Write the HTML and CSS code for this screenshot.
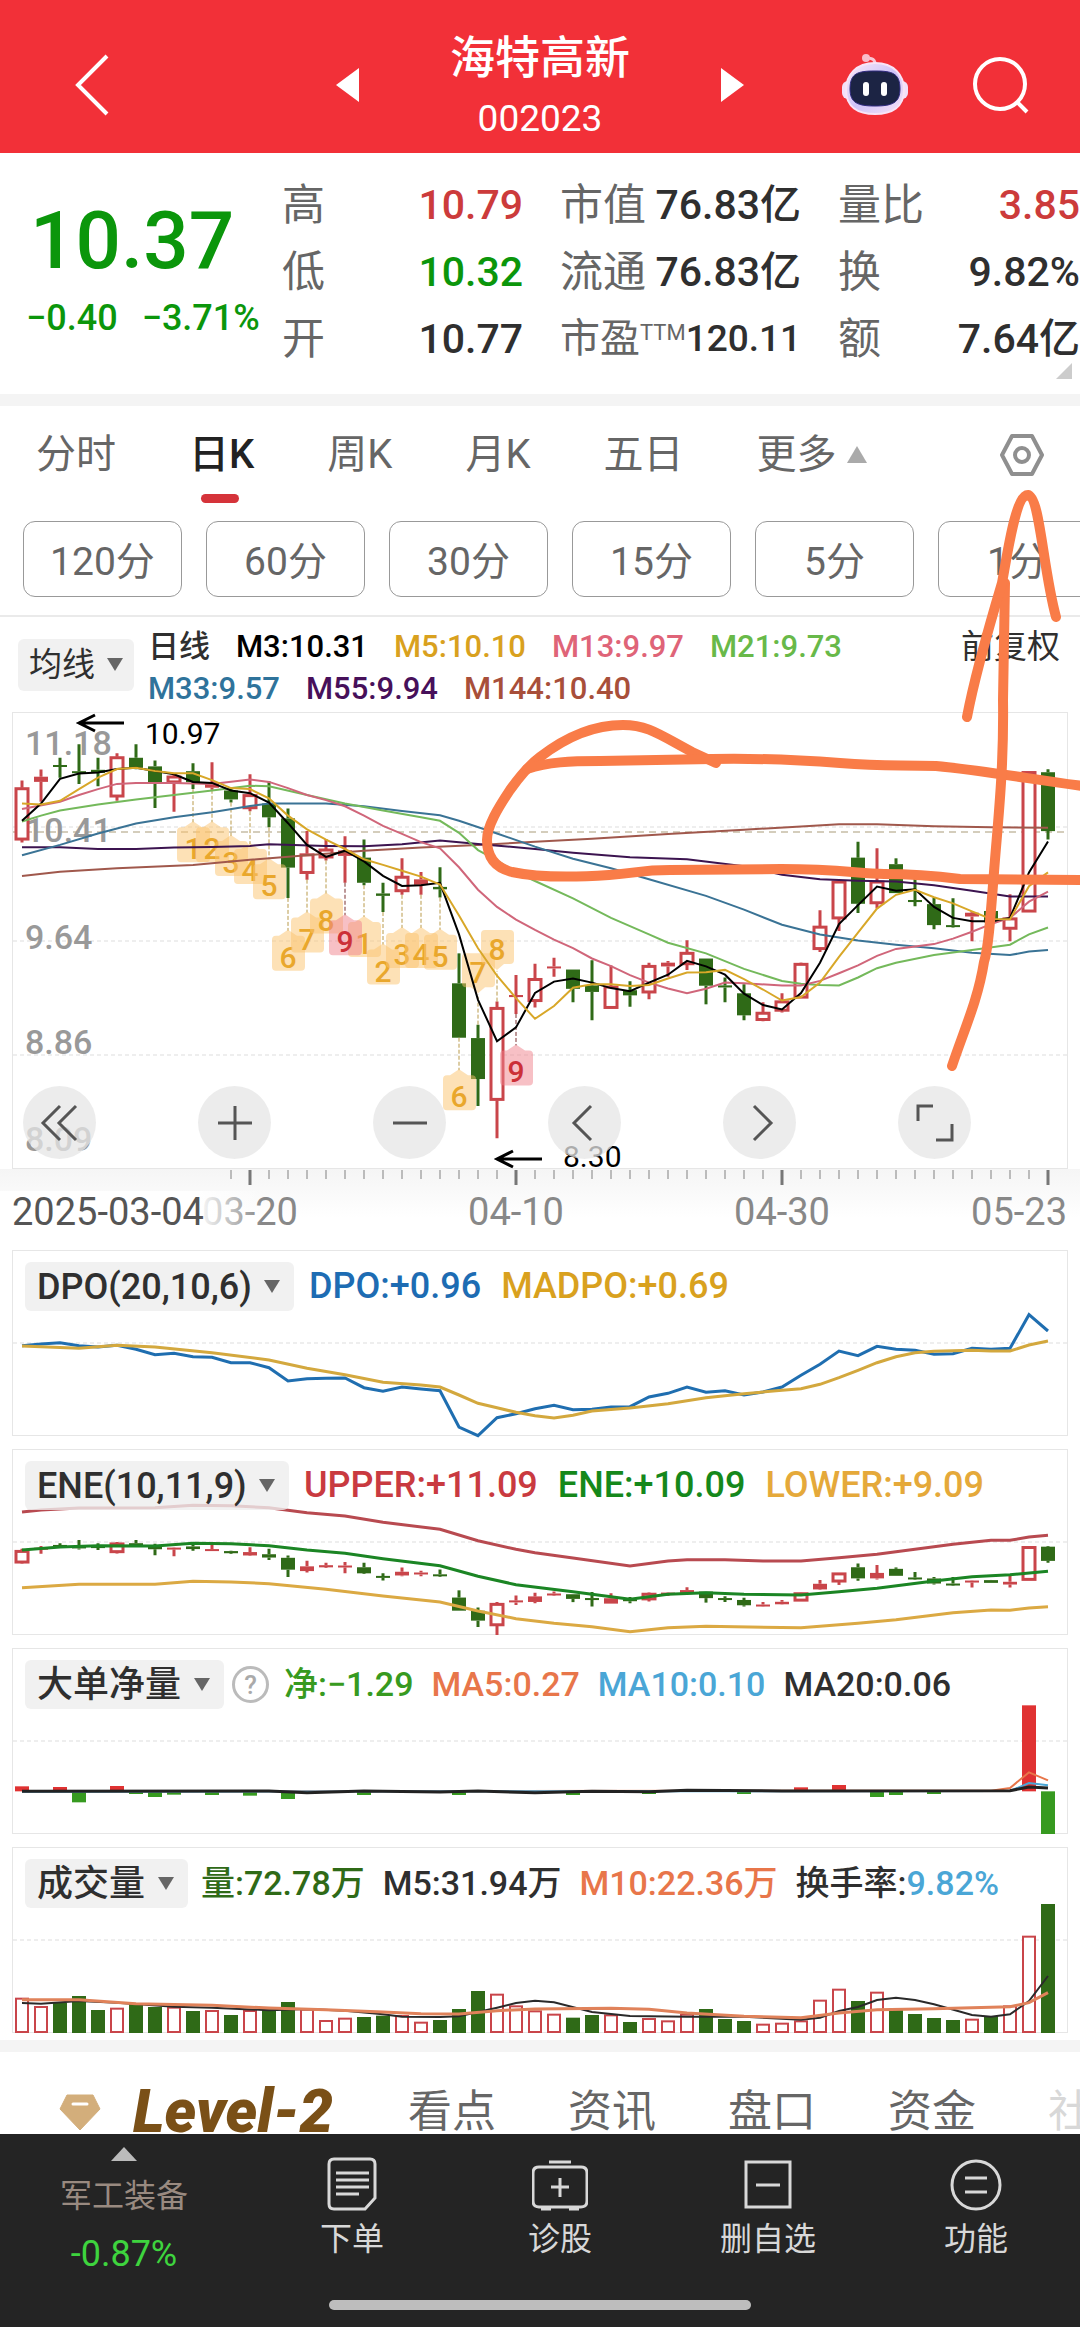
FILE: index.html
```html
<!DOCTYPE html>
<html lang="zh-CN">
<head>
    <meta charset="UTF-8">
    <meta name="viewport" content="width=device-width, initial-scale=1.0">
    <title>海特高新 002023</title>
    <link rel="stylesheet" href="styles.css">
</head>
<body>

<header class="topbar">
    <button class="icon-btn" aria-label="返回">
        <svg width="36" height="62" viewBox="0 0 36 62"><path d="M33 2 L4 31 L33 60" fill="none" stroke="#fff" stroke-width="4"/></svg>
    </button>
    <div class="stock-nav">
        <button class="icon-btn" aria-label="上一只">
            <svg width="23" height="36" viewBox="0 0 23 36"><path d="M23 1 V35 L0 18 Z" fill="#fff"/></svg>
        </button>
        <div class="stock-title">
            <h1>海特高新</h1>
            <span class="code">002023</span>
        </div>
        <button class="icon-btn" aria-label="下一只">
            <svg width="23" height="36" viewBox="0 0 23 36"><path d="M0 1 V35 L23 18 Z" fill="#fff"/></svg>
        </button>
    </div>
    <div class="top-icons">
        <button class="icon-btn" aria-label="智能助手">
            <svg width="66" height="64" viewBox="0 0 66 64">
                <defs>
                    <linearGradient id="shell" x1="0" y1="0" x2="1" y2="1">
                        <stop offset="0" stop-color="#fbe9f8"/>
                        <stop offset="0.5" stop-color="#cfc4f8"/>
                        <stop offset="1" stop-color="#f8e2f6"/>
                    </linearGradient>
                </defs>
                <path d="M33 14 C34 6 30 5 24 5" fill="none" stroke="#f9c6d4" stroke-width="3" stroke-linecap="round"/>
                <circle cx="24" cy="5" r="4" fill="#f9bccb"/>
                <rect x="0" y="28" width="12" height="18" rx="6" fill="#f2e0fa"/>
                <rect x="54" y="28" width="12" height="18" rx="6" fill="#f2e0fa"/>
                <path d="M33 10 C52 10 62 22 62 37 C62 54 50 61 33 61 C16 61 4 54 4 37 C4 22 14 10 33 10 Z" fill="url(#shell)" stroke="#f9e3f6" stroke-width="2"/>
                <path d="M33 18 C50 18 58 20 58 36 C58 50 50 53 33 53 C16 53 8 50 8 36 C8 20 16 18 33 18 Z" fill="#1c2444" stroke="#2f2a80" stroke-width="1"/>
                <rect x="21" y="29" width="6" height="14" rx="3" fill="#fff"/>
                <rect x="39" y="29" width="6" height="14" rx="3" fill="#fff"/>
            </svg>
        </button>
        <button class="icon-btn" aria-label="搜索">
            <svg width="58" height="58" viewBox="0 0 58 58"><circle cx="28" cy="28" r="25" fill="none" stroke="#fff" stroke-width="4"/><path d="M45 46 L55 56" stroke="#fff" stroke-width="4"/></svg>
        </button>
    </div>
</header>

<section class="quote">
    <div class="price">
        <div class="last">10.37</div>
        <div class="change"><span>−0.40</span><span>−3.71%</span></div>
    </div>
    <dl>
        <div><dt>高</dt><dd class="up">10.79</dd></div>
        <div><dt>低</dt><dd class="down">10.32</dd></div>
        <div><dt>开</dt><dd>10.77</dd></div>
    </dl>
    <dl>
        <div><dt>市值</dt><dd>76.83亿</dd></div>
        <div><dt>流通</dt><dd>76.83亿</dd></div>
        <div><dt class="pe">市盈<sup>TTM</sup></dt><dd class="pe">120.11</dd></div>
    </dl>
    <dl>
        <div><dt>量比</dt><dd class="up">3.85</dd></div>
        <div><dt>换</dt><dd>9.82%</dd></div>
        <div><dt>额</dt><dd>7.64亿</dd></div>
    </dl>
    <i class="corner"></i>
</section>

<nav class="period">
    <a href="#">分时</a>
    <a href="#" class="active">日K</a>
    <a href="#">周K</a>
    <a href="#">月K</a>
    <a href="#">五日</a>
    <a href="#" class="more">更多</a>
    <button class="icon-btn settings" aria-label="设置">
        <svg width="44" height="44" viewBox="0 0 44 44" fill="none" stroke="#8f8f8f" stroke-width="4"><path d="M12 3 H32 L42 22 L32 41 H12 L2 22 Z" stroke-linejoin="round"/><circle cx="22" cy="22" r="7"/></svg>
    </button>
</nav>

<div class="minutes">
    <button>120分</button>
    <button>60分</button>
    <button>30分</button>
    <button>15分</button>
    <button>5分</button>
    <button>1分</button>
</div>

<section class="ma-bar">
    <label class="picker small"><select aria-label="主图指标"><option>均线</option></select></label>
    <div class="ma-legend">
        <span class="c-dark">日线</span>
        <span class="c-black">M3:10.31</span>
        <span class="c-gold">M5:10.10</span>
        <span class="c-pink">M13:9.97</span>
        <span class="c-lime">M21:9.73</span>
        <span class="c-teal">M33:9.57</span>
        <span class="c-purple">M55:9.94</span>
        <span class="c-brown">M144:10.40</span>
    </div>
    <a href="#" class="adjust">前复权</a>
</section>

<section class="panel main-panel">
    <svg id="kline" viewBox="0 0 1054 455"></svg>
    <div class="tools">
        <button aria-label="隐藏"><svg viewBox="0 0 40 40"><path d="M20 3 L3 20 L20 37 M36 3 L19 20 L36 37"/></svg></button>
        <button aria-label="放大"><svg viewBox="0 0 40 40"><path d="M20 3 V37 M3 20 H37"/></svg></button>
        <button aria-label="缩小"><svg viewBox="0 0 40 40"><path d="M3 20 H37"/></svg></button>
        <button aria-label="左移"><svg viewBox="0 0 40 40"><path d="M26 3 L9 20 L26 37"/></svg></button>
        <button aria-label="右移"><svg viewBox="0 0 40 40"><path d="M14 3 L31 20 L14 37"/></svg></button>
        <button aria-label="全屏"><svg viewBox="0 0 40 40"><path d="M18 3 H3 V18 M37 21 V37 H21"/></svg></button>
    </div>
</section>
<svg id="axis" class="axis" viewBox="0 0 1080 81"></svg>

<section class="panel">
    <svg id="dpo" viewBox="0 0 1054 184"></svg>
    <div class="panel-head">
        <label class="picker"><select aria-label="副图一"><option>DPO(20,10,6)</option></select></label>
        <span class="c-blue">DPO:+0.96</span>
        <span class="c-gold">MADPO:+0.69</span>
    </div>
</section>

<section class="panel">
    <svg id="ene" viewBox="0 0 1054 184"></svg>
    <div class="panel-head">
        <label class="picker"><select aria-label="副图二"><option>ENE(10,11,9)</option></select></label>
        <span class="c-red">UPPER:+11.09</span>
        <span class="c-green">ENE:+10.09</span>
        <span class="c-amber">LOWER:+9.09</span>
    </div>
</section>

<section class="panel">
    <svg id="net" viewBox="0 0 1054 184"></svg>
    <div class="panel-head compact">
        <label class="picker"><select aria-label="副图三"><option>大单净量</option></select></label>
        <button class="help" aria-label="说明">?</button>
        <span class="c-grass">净:−1.29</span>
        <span class="c-orange">MA5:0.27</span>
        <span class="c-sky">MA10:0.10</span>
        <span class="c-dark">MA20:0.06</span>
    </div>
</section>

<section class="panel last-panel">
    <svg id="vol" viewBox="0 0 1054 184"></svg>
    <div class="panel-head compact">
        <label class="picker"><select aria-label="副图四"><option>成交量</option></select></label>
        <span class="c-forest">量:72.78万</span>
        <span class="c-dark">M5:31.94万</span>
        <span class="c-orange">M10:22.36万</span>
        <span class="c-dark">换手率:<b class="c-sky">9.82%</b></span>
    </div>
</section>

<nav class="info-tabs">
    <a href="#" class="level">
        <svg width="42" height="38" viewBox="0 0 42 38"><path d="M8 2 H34 L41 16 L21 37 L1 16 Z" fill="#d3ae7b" stroke="#d3ae7b" stroke-linejoin="round"/><path d="M14 11 H28" stroke="#fff" stroke-width="3" stroke-linecap="round"/></svg>
        Level-2
    </a>
    <a href="#">看点</a>
    <a href="#">资讯</a>
    <a href="#">盘口</a>
    <a href="#">资金</a>
    <a href="#" class="faded">社</a>
</nav>

<footer class="bottom">
    <div class="actions">
        <a href="#" class="sector">
            <i class="tri-up"></i>
            <span>军工装备</span>
            <b>-0.87%</b>
        </a>
        <a href="#">
            <svg viewBox="0 0 56 56"><path d="M10 3 H46 Q51 3 51 8 V42 L41 53 H10 Q5 53 5 48 V8 Q5 3 10 3 Z M12 17 H45 M12 24 H45 M12 31 H45 M12 38 H35"/></svg>
            下单
        </a>
        <a href="#">
            <svg viewBox="0 0 56 56"><path d="M7 11 H49 Q55 11 55 17 V45 Q55 51 49 51 H7 Q1 51 1 45 V17 Q1 11 7 11 Z M17 6 H39 M28 22 V41 M19 31 H37 M9 53 H19 M37 53 H47"/></svg>
            诊股
        </a>
        <a href="#">
            <svg viewBox="0 0 56 56"><path d="M6 6 H50 V51 H6 Z M16 29 H40"/></svg>
            删自选
        </a>
        <a href="#">
            <svg viewBox="0 0 56 56"><circle cx="28" cy="29" r="24"/><path d="M17 22 H39 M17 36 H39"/></svg>
            功能
        </a>
    </div>
    <div class="home-bar"></div>
</footer>

<!-- hand drawn notes on top of everything -->
<svg class="notes" viewBox="0 0 1080 2327">
    <path d="M716 763 L692 752 C660 735 648 725 623 725 C590 725 562 740 540 757 C528 766 520 776 510 790 C498 808 487 826 487 840 C487 858 496 868 512 872 C540 878 580 877 609 875 S640 870 670 870 L781 869 C840 869 860 874 884 874 S936 876 960 879 L1090 880"/>
    <path d="M527 769 C548 762 570 761 600 761 L712 759 C764 758 800 760 840 763 S884 765 936 766 C980 770 1030 779 1090 787"/>
    <path d="M1005 583 L1003 700 C1004 770 998 820 994 872 S988 950 984 962 C978 1000 964 1030 952 1066"/>
    <path d="M967 717 C974 680 988 630 1002 583 C1008 550 1016 495 1028 495 C1040 497 1043 570 1056 617"/>
</svg>

<script src="chart.js"></script>
</body>
</html>
```

FILE: styles.css
```css
* {
    box-sizing: border-box;
}
body {
    margin: 0;
    position: relative;
    overflow-x: hidden;
    background: #fff;
    color: #2f2f2f;
    font-family: Roboto, "Noto Sans CJK SC", sans-serif;
}
a {
    color: inherit;
    text-decoration: none;
}
button,
select {
    font: inherit;
    color: inherit;
    background: none;
    border: none;
    margin: 0;
    padding: 0;
}
svg {
    display: block;
}
.icon-btn {
    display: flex;
}

/* top bar */
.topbar {
    display: grid;
    grid-template-columns: 1fr 408px 1fr;
    align-items: center;
    height: 153px;
    padding: 16px 50px 0 74px;
    background: #f23038;
    color: #fff;
}
.stock-nav {
    display: flex;
    justify-content: space-between;
    align-items: center;
    margin-left: -12px;
    margin-right: 12px;
}
.stock-title {
    display: flex;
    flex-direction: column;
    align-items: center;
    padding-top: 4px;
}
.stock-title h1 {
    margin: 0;
    font-size: 45px;
    line-height: 64px;
    font-weight: 500;
}
.code {
    font-size: 37px;
    line-height: 56px;
}
.top-icons {
    display: flex;
    justify-content: flex-end;
    align-items: center;
    gap: 64px;
}

/* quote */
.quote {
    position: relative;
    display: grid;
    grid-template-columns: 282px 241px 241px 1fr;
    column-gap: 36px;
    column-gap: 0;
    height: 241px;
    padding-top: 18px;
}
.quote .price {
    padding: 18px 0 0 26px;
    color: #0b960b;
}
.last {
    padding-left: 4px;
    font-size: 80px;
    line-height: 104px;
    font-weight: 500;
}
.change {
    display: flex;
    gap: 24px;
    font-size: 36px;
    line-height: 50px;
    font-weight: 500;
}
.quote dl {
    margin: 0;
}
.quote dl + dl {
    padding-left: 37px;
}
.quote dl:nth-of-type(2) {
    margin-right: -37px;
}
.quote dl:nth-of-type(3) {
    padding-left: 74px;
}
.quote dl div {
    display: flex;
    justify-content: space-between;
    align-items: center;
    height: 67px;
}
.quote dt {
    font-size: 43px;
    line-height: 60px;
    color: #666;
    white-space: nowrap;
}
.quote dd {
    margin: 0;
    font-size: 41px;
    line-height: 60px;
    font-weight: 500;
    white-space: nowrap;
}
.quote dt.pe {
    font-size: 40px;
}
.quote dd.pe {
    font-size: 37px;
}
.quote sup {
    font-size: 22px;
    line-height: 1;
    vertical-align: 12px;
}
.up {
    color: #cc3b3b;
}
.down {
    color: #0b960b;
}
.corner {
    position: absolute;
    right: 8px;
    bottom: 15px;
    border-left: 16px solid transparent;
    border-bottom: 16px solid #ccc;
}

/* period tabs */
.period {
    display: flex;
    align-items: center;
    gap: 73px;
    height: 115px;
    padding: 0 36px 6px;
    border-top: 12px solid #f4f4f4;
    font-size: 40px;
    line-height: 96px;
    color: #666;
}
.period a {
    position: relative;
    white-space: nowrap;
}
.period .active {
    color: #222;
    font-weight: 500;
}
.period .active::after {
    content: "";
    position: absolute;
    left: 12px;
    bottom: 0;
    width: 38px;
    height: 9px;
    border-radius: 5px;
    background: #d5333a;
}
.period .more {
    display: flex;
    align-items: center;
    gap: 10px;
}
.more::after {
    content: "";
    border: 10px solid transparent;
    border-top: 0;
    border-bottom: 17px solid #aaa;
}
.settings {
    margin-left: auto;
}

/* minute buttons */
.minutes {
    display: flex;
    gap: 24px;
    padding: 12px 0 18px 23px;
    border-bottom: 2px solid #eaeaea;
    overflow: hidden;
}
.minutes button {
    flex: none;
    width: 159px;
    height: 76px;
    padding-bottom: 3px;
    border: 1px solid #999;
    border-radius: 12px;
    font-size: 39px;
    color: #666;
}

/* moving averages */
.ma-bar {
    display: flex;
    align-items: center;
    gap: 14px;
    height: 95px;
    padding: 0 20px 0 18px;
}
.ma-legend {
    flex: 1;
    display: flex;
    flex-wrap: wrap;
    column-gap: 26px;
    max-width: 780px;
    padding-top: 6px;
    font-size: 31px;
    line-height: 42px;
    font-weight: 500;
}
.adjust {
    align-self: flex-start;
    margin-left: auto;
    font-size: 33px;
    line-height: 60px;
}
.picker {
    display: flex;
    align-items: center;
    gap: 12px;
    height: 49px;
    padding: 0 14px 0 12px;
    border-radius: 6px;
    background: rgba(238, 238, 238, 0.8);
    font-size: 36px;
}
.picker select {
    appearance: none;
    line-height: 48px;
    font-weight: 500;
}
.picker::after {
    content: "";
    border: 8px solid transparent;
    border-bottom: 0;
    border-top: 13px solid #666;
}
.picker.small {
    height: 52px;
    padding: 0 11px;
    font-size: 33px;
}
.small select {
    font-weight: 400;
}

/* chart panels: drawing and labels share one grid cell */
.panel {
    display: grid;
    margin: 0 12px 13px 12px;
    border: 1px solid #e6e6e6;
}
.panel > * {
    grid-area: 1 / 1;
    min-width: 0;
}
.panel > svg {
    width: 100%;
    overflow: visible;
}
.main-panel {
    margin-bottom: 0;
}
.last-panel {
    margin-bottom: 7px;
}
.panel-head {
    display: flex;
    align-items: center;
    align-self: start;
    gap: 20px;
    padding: 11px 0 0 12px;
    font-size: 36px;
    line-height: 49px;
    font-weight: 500;
    white-space: nowrap;
}
.panel-head .picker {
    margin-right: -5px;
}
.panel-head b {
    font-weight: 500;
}
.compact {
    gap: 18px;
    font-size: 34px;
}
.help {
    width: 37px;
    height: 37px;
    margin: 0 -3px 0 -5px;
    border: 3px solid #bbb;
    border-radius: 50%;
    font-size: 26px;
    line-height: 30px;
    color: #aaa;
}
.tools {
    align-self: end;
    display: flex;
    gap: 102px;
    padding: 0 0 9px 10px;
}
.tools button {
    display: flex;
    align-items: center;
    justify-content: center;
    width: 73px;
    height: 73px;
    border-radius: 50%;
    background: rgba(230, 230, 230, 0.75);
}
.tools svg {
    width: 40px;
    height: 40px;
    fill: none;
    stroke: #555;
    stroke-width: 3;
}
.axis {
    width: 100%;
    background: linear-gradient(#f5f5f5, #fff 60%);
}

/* chart text */
.scale {
    font-size: 34px;
    font-weight: 500;
    fill: #999;
}
.mark {
    font-size: 30px;
    fill: #000;
}
.date {
    font-size: 38px;
    fill: #888;
}
.date.first {
    fill: #555;
}
.turn {
    font-size: 30px;
    font-weight: 500;
    text-anchor: middle;
    fill: #e9a72c;
}
.turn.nine {
    fill: #cc3038;
}

/* legend colours */
.c-black { color: #000; }
.c-dark { color: #2f2f2f; }
.c-gold { color: #d9a11e; }
.c-pink { color: #df6478; }
.c-lime { color: #68b949; }
.c-teal { color: #2f739b; }
.c-purple { color: #47105a; }
.c-brown { color: #a84f3a; }
.c-blue { color: #1d6cb3; }
.c-red { color: #c93a40; }
.c-green { color: #15881b; }
.c-amber { color: #e5a93a; }
.c-grass { color: #379a20; }
.c-orange { color: #e8764a; }
.c-sky { color: #4aa6d6; }
.c-forest { color: #2f6a17; }

/* info tabs */
.info-tabs {
    display: flex;
    gap: 72px;
    height: 94px;
    padding: 38px 0 0 59px;
    border-top: 12px solid #f4f4f4;
    overflow: hidden;
    font-size: 44px;
    line-height: 44px;
    color: #666;
    white-space: nowrap;
}
.info-tabs a {
    flex: none;
}
.info-tabs .level {
    display: flex;
    align-items: center;
    gap: 32px;
    width: 277px;
    height: 44px;
    font-size: 60px;
    font-style: italic;
    font-weight: 900;
    color: #7a5017;
}
.faded {
    opacity: 0.25;
}

/* footer */
.bottom {
    height: 193px;
    padding-top: 12px;
    background: #242424;
    color: #d8d8d8;
}
.actions {
    display: grid;
    grid-template-columns: 248fr 208fr 208fr 208fr 208fr;
    height: 154px;
}
.actions a {
    display: flex;
    flex-direction: column;
    align-items: center;
    padding-top: 10px;
    font-size: 32px;
    line-height: 54px;
}
.actions svg {
    width: 56px;
    height: 56px;
    fill: none;
    stroke: #d8d8d8;
    stroke-width: 3;
}
.actions .sector {
    padding-top: 1px;
    line-height: 58px;
    color: #998a80;
}
.sector b {
    font-size: 36px;
    color: #3ed43e;
    font-weight: 400;
}
.tri-up {
    margin-bottom: 6px;
    border: 13px solid transparent;
    border-top: 0;
    border-bottom: 14px solid #bbb;
}
.home-bar {
    width: 39%;
    height: 10px;
    margin: 0 auto;
    border-radius: 5px;
    background: #bdbdbd;
}

.notes {
    position: absolute;
    top: 0;
    left: 0;
    width: 100%;
    pointer-events: none;
    fill: none;
    stroke: #f97c48;
    stroke-width: 10;
    stroke-linecap: round;
    stroke-linejoin: round;
}
```

FILE: chart.js
```js
const RED = '#c9454a';
const GREEN = '#2f6a17';
const STEP = 19;
const LEFT = 9;

const x = i => LEFT + i * STEP;

// [high, body top, body bottom, low, rising]
const candles = [
    [233,254,406,413,1],[201,222,237,295,1],[167,188,193,225,0],[128,206,211,243,0],[167,202,211,250,0],
    [154,164,281,292,1],[128,167,196,200,0],[175,192,240,313,0],[215,220,240,324,1],[183,206,238,258,0],
    [180,238,254,260,1],[258,262,288,297,0],[215,274,315,322,1],[235,300,340,369,0],[314,343,486,574,0],
    [380,446,503,521,1],[403,432,458,465,1],[395,436,452,530,1],[404,457,530,537,0],[530,561,568,615,0],
    [459,511,556,565,1],[499,520,536,565,1],[485,542,549,573,0],[735,822,980,980,0],[942,981,1100,1178,0],
    [875,892,1162,1272,1],[798,856,862,911,1],[765,808,875,892,1],[748,773,778,803,1],[782,782,838,877,0],
    [755,828,847,929,0],[770,830,895,895,1],[816,842,857,890,0],[762,770,850,868,1],[757,762,773,803,1],
    [697,732,768,783,1],[750,750,829,883,0],[805,828,834,877,0],[825,851,915,929,0],[877,906,930,932,1],
    [851,873,903,907,1],[762,764,865,865,1],[610,656,724,731,1],[525,525,635,670,1],[411,457,591,618,0],
    [430,525,591,605,1],[459,476,560,560,0],[515,580,586,598,0],[573,592,653,665,0],[575,653,658,660,0],
    [612,617,628,700,1],[610,612,645,645,0],[563,632,665,700,1],[207,207,615,615,1],[200,209,380,404,0]
];

// moving averages: index:value pairs
const averages = [
    ['#a0584c', '0:510 2:498 5:488 9:478 12:463 15:450 18:437 21:428 24:420 27:411 30:402 34:388 38:376 41:367 43:360 45:360 48:366 51:369 54:370'],
    ['#3c1450', '0:427 2:427 4:432 6:432 8:428 10:426 12:423 13:418 16:423 18:424 20:418 22:407 24:417 27:432 29:443 32:456 35:462 38:482 40:507 42:520 44:524 46:526 48:537 50:553 52:570 54:570'],
    ['#3a7395', '0:450 2:420 4:387 6:358 8:340 10:325 12:307 13:300 16:300 18:308 20:322 22:334 23:350 25:387 27:425 29:460 31:488 33:520 36:568 38:608 40:652 42:680 44:698 46:710 48:720 50:733 52:740 53:730 54:725'],
    ['#74b95b', '0:352 1:335 2:320 4:303 6:288 8:275 10:262 12:248 13:250 15:275 17:300 19:320 21:340 22:350 23:385 24:435 25:465 26:500 27:525 29:575 31:632 33:680 34:704 36:735 38:780 40:815 41:823 42:827 43:828 44:805 45:778 46:762 48:740 50:725 52:710 53:680 54:660'],
    ['#d0667a', '0:316 2:295 3:275 4:258 5:243 6:240 8:240 10:243 12:230 13:237 14:255 15:275 16:290 17:308 18:335 19:365 20:388 21:412 22:430 23:485 24:550 25:600 26:637 27:667 28:695 29:720 30:750 31:772 32:798 33:820 34:837 35:851 36:838 37:820 38:822 40:828 41:828 42:815 43:793 44:770 45:742 46:722 47:715 48:708 49:692 50:672 51:650 52:632 53:585 54:556'],
    ['#000', '0:350 1:300 2:228 3:213 4:210 5:200 6:196 7:205 8:215 9:237 10:240 11:262 12:270 13:297 14:357 15:420 16:455 17:437 18:468 19:510 20:539 21:537 22:530 23:680 24:870 25:990 26:950 27:850 28:817 29:808 30:820 31:836 32:845 33:820 34:797 35:757 36:773 37:797 38:852 39:885 40:898 41:850 42:762 43:650 44:595 45:541 46:553 47:549 48:600 49:632 50:642 51:642 52:632 53:500 54:410'],
    ['#d8a728', '0:300 1:303 2:292 3:258 4:225 5:200 6:196 7:205 8:212 9:212 10:232 11:255 12:258 13:285 14:335 15:375 16:405 17:432 18:462 19:478 20:495 21:512 22:535 23:625 24:720 25:800 26:865 27:925 28:888 29:835 30:825 31:825 32:830 33:827 34:808 35:791 36:790 37:783 38:810 39:840 40:872 41:862 42:820 43:745 44:675 45:605 46:565 47:550 48:572 49:590 50:613 51:635 52:636 53:540 54:500']
];

// [index, label, centre]
const turns = [
    [9,'1',430],[10,'2',430],[11,'3',470],[12,'4',493],[13,'5',537],[14,'6',745],[15,'7',692],[16,'8',637],
    [18,'1',705],[17,'9',700],[19,'2',785],[20,'3',737],[21,'4',737],[22,'5',742],[23,'6',1150],[24,'7',790],[25,'8',722],[26,'9',1078]
];

function line(pairs, y, color, width = 2) {
    const points = pairs.split(' ').map(p => {
        const [i, v] = p.split(':').map(Number);
        return x(i) + ',' + y(v).toFixed(1);
    }).join(' ');
    return `<polyline points="${points}" fill="none" stroke="${color}" stroke-width="${width}"/>`;
}

function grid(y, color = '#ddd') {
    return `<path d="M0 ${y} H1054" stroke="${color}" stroke-width="1" stroke-dasharray="4 3"/>`;
}

function candle(c, i, y) {
    const [hi, top, bot, lo, up] = c;
    const color = up ? RED : GREEN;
    const t = y(top), h = Math.max(y(bot) - t, 2);
    const hollow = up && h > 6;
    const inset = hollow ? 1 : 0;
    return `<path d="M${x(i)} ${y(hi)} V${t} M${x(i)} ${t + h} V${y(lo)}" stroke="${color}" stroke-width="3"/>
        <rect x="${x(i) - 7 + inset}" y="${t + inset}" width="${14 - inset * 2}" height="${h - inset * 2}"
        fill="${hollow ? '#fff' : color}" stroke="${hollow ? color : 'none'}" stroke-width="3"/>`;
}

function drawKline() {
    const y = v => (v - 37) / 2.904;
    let out = grid(114) + grid(228) + grid(342) + `<path d="M0 119 H1054" stroke="#a99b78" stroke-width="1" stroke-dasharray="7 5"/>`;
    [['11.18', 42], ['10.41', 129], ['9.64', 236], ['8.86', 341], ['8.09', 438]].forEach(([t, ty]) => {
        out += `<text class="scale" x="12" y="${ty}">${t}</text>`;
    });
    candles.forEach((c, i) => out += candle(c, i, y));
    turns.forEach(([i, label, mid]) => {
        const cx = x(i), cy = y(mid), nine = label === '9';
        const above = i === 24 || i === 25;
        const edge = above ? cy + 22 : cy - 26;
        const end = y(above ? candles[i][0] : candles[i][3]);
        const shape = above
            ? `M${cx - 12} ${cy - 19} h25 q4 0 4 4 v26 q0 4 -4 4 h-6 l-7 6 l-7 -6 h-5 q-4 0 -4 -4 v-26 q0 -4 4 -4 Z`
            : `M${cx - 12} ${cy + 14} h25 q4 0 4 -4 v-27 q0 -4 -4 -4 h-4 l-9 -6 l-9 6 h-3 q-4 0 -4 4 v27 q0 4 4 4 Z`;
        out += `<path d="M${cx} ${end} V${edge}" stroke="${nine ? '#7a3030' : '#b99a4a'}" stroke-width="1" stroke-dasharray="4 2"/>
            <path d="${shape}" fill="${nine ? '#f0828c' : '#fbc46e'}" fill-opacity="0.5"/>
            <text class="turn${nine ? ' nine' : ''}" x="${cx}" y="${cy + 11}">${label}</text>`;
    });
    averages.forEach(([color, pairs]) => out += line(pairs, y, color));
    out += `<g fill="none" stroke="#000" stroke-width="3"><path d="M111 10 H66 M82 2 L66 10 L82 18"/><path d="M529 446 H484 M500 438 L484 446 L500 454"/></g>
        <text class="mark" x="132" y="31">10.97</text><text class="mark" x="550" y="454">8.30</text>`;
    document.getElementById('kline').innerHTML = out;
}

function drawAxis() {
    let out = '<defs><linearGradient id="fade"><stop offset="0.75" stop-color="#fff"/><stop offset="1" stop-color="#fff" stop-opacity="0"/></linearGradient></defs>';
    for (let i = 11; i < 55; i++) {
        const major = (i - 12) % 14 === 0;
        out += `<path d="M${x(i) + 13} 1 v${major ? 15 : 9}" stroke="${major ? '#777' : '#bbb'}" stroke-width="${major ? 3 : 2}"/>`;
    }
    out += `<text class="date" x="250" y="56" text-anchor="middle">03-20</text>
        <rect x="0" y="22" width="262" height="44" fill="url(#fade)"/>
        <text class="date first" x="12" y="56">2025-03-04</text>
        <text class="date" x="516" y="56" text-anchor="middle">04-10</text>
        <text class="date" x="782" y="56" text-anchor="middle">04-30</text>
        <text class="date" x="1067" y="56" text-anchor="end">05-23</text>`;
    document.getElementById('axis').innerHTML = out;
}

function drawDpo() {
    const y = v => (v - 30) / 3;
    document.getElementById('dpo').innerHTML = grid(92)
        + line('0:314 1:309 2:305 3:314 4:318 5:313 6:325 7:341 8:337 9:347 10:349 11:365 12:365 13:380 14:420 15:413 16:412 17:411 18:440 19:451 20:438 21:444 22:449 23:558 24:584 25:530 26:518 27:503 28:493 29:506 30:505 31:498 32:497 33:468 34:457 35:438 36:454 37:449 38:462 39:453 40:438 41:403 42:370 43:330 44:344 45:316 46:325 47:328 48:340 49:338 50:322 51:325 52:322 53:221 54:270', y, '#1f6eb0', 3)
        + line('0:315 3:322 5:313 7:318 10:335 13:357 15:382 17:401 19:424 21:432 22:438 23:462 24:487 25:500 26:514 27:524 28:531 29:523 30:510 32:501 34:488 36:470 38:458 40:448 41:443 42:430 43:410 44:388 45:365 46:347 47:335 48:331 50:328 51:330 52:330 53:312 54:300', y, '#d3a83e', 3);
}

function drawEne() {
    const y = v => (v - 627) / 3;
    let out = grid(92);
    candles.forEach((c, i) => out += candle(c, i, v => y(865 + v * 0.249)));
    out += line('0:813 1:807 3:801 7:800 9:793 11:794 13:800 15:815 17:825 19:844 22:865 24:899 26:925 27:935 29:951 32:975 34:960 35:956 37:956 39:960 41:960 43:950 45:940 47:925 49:910 51:898 52:898 53:888 54:883', y, '#b84a50', 3);
    out += line('0:927 2:918 4:914 7:915 9:907 11:908 13:914 15:927 17:937 19:953 22:974 24:1006 26:1031 29:1052 32:1075 34:1060 36:1055 38:1060 41:1062 43:1052 45:1042 48:1020 50:1007 52:1001 54:991', y, '#1b8524', 3);
    out += line('0:1040 3:1030 7:1030 9:1021 11:1023 13:1028 16:1045 19:1065 22:1083 24:1110 26:1133 28:1147 30:1157 32:1172 34:1160 36:1156 41:1160 44:1147 46:1136 49:1115 51:1107 52:1108 53:1101 54:1097', y, '#dba943', 3);
    document.getElementById('ene').innerHTML = out;
}

function drawNet() {
    const y = v => (v - 23) / 3;
    const bars = { 0: 435, 2: 437, 3: 483, 5: 434, 6: 458, 7: 467, 8: 460, 10: 461, 12: 463, 14: 473, 18: 461, 23: 461, 29: 461, 33: 458, 38: 458, 41: 438, 43: 431, 45: 467, 46: 461, 48: 458, 53: 192, 54: 578 };
    let out = grid(92);
    for (const i in bars) {
        const v = bars[i], up = v < 450;
        out += `<rect x="${x(+i) - 7}" y="${y(Math.min(v, 450))}" width="14" height="${Math.abs(v - 450) / 3}" fill="${up ? '#e03232' : '#379a20'}"/>`;
    }
    out += line('0:450 51:448 52:440 53:393 54:417', y, '#e8764a');
    out += line('0:451 52:449 53:425 54:432', y, '#4aa6d6');
    out += line('0:450 13:449 15:454 18:449 22:452 24:449 27:454 30:450 33:451 35:447 40:449 52:448 53:437 54:440', y, '#222', 3);
    document.getElementById('net').innerHTML = out;
}

function drawVol() {
    const y = v => (v - 621) / 3;
    const tops = [1070,1095,1085,1065,1107,1100,1090,1098,1097,1110,1107,1122,1107,1105,1083,1103,1137,1130,1128,1124,1122,1142,1137,1104,1050,1058,1093,1108,1118,1130,1122,1120,1143,1131,1138,1118,1104,1134,1140,1148,1145,1138,1076,1043,1080,1052,1105,1119,1131,1137,1133,1125,1093,884,789];
    const falling = [2,3,4,6,7,9,11,13,14,18,19,22,23,24,29,30,32,36,37,38,44,46,47,48,49,51,54];
    let out = grid(92);
    tops.forEach((v, i) => {
        const t = y(v), h = 185 - t;
        out += falling.includes(i)
            ? `<rect x="${x(i) - 7}" y="${t}" width="14" height="${h}" fill="${GREEN}"/>`
            : `<rect x="${x(i) - 6}" y="${t + 1}" width="12" height="${h - 2}" fill="#fff" stroke="${RED}" stroke-width="2"/>`;
    });
    out += line('0:1086 1:1088 3:1080 5:1085 8:1097 10:1100 13:1108 15:1104 17:1109 19:1120 20:1127 22:1128 23:1126 25:1100 26:1086 27:1079 28:1084 30:1113 32:1125 35:1127 38:1127 41:1136 42:1130 43:1110 44:1098 45:1077 46:1070 47:1077 48:1090 50:1122 51:1127 52:1120 53:1080 54:1005', y, '#2a2a2a');
    out += line('0:1076 3:1076 6:1088 10:1093 13:1101 16:1106 19:1113 21:1118 23:1119 25:1109 27:1104 31:1102 33:1105 35:1116 38:1126 41:1130 43:1116 45:1106 48:1103 52:1097 53:1085 54:1055', y, '#e0825a', 3);
    document.getElementById('vol').innerHTML = out;
}

drawKline();
drawAxis();
drawDpo();
drawEne();
drawNet();
drawVol();
```
